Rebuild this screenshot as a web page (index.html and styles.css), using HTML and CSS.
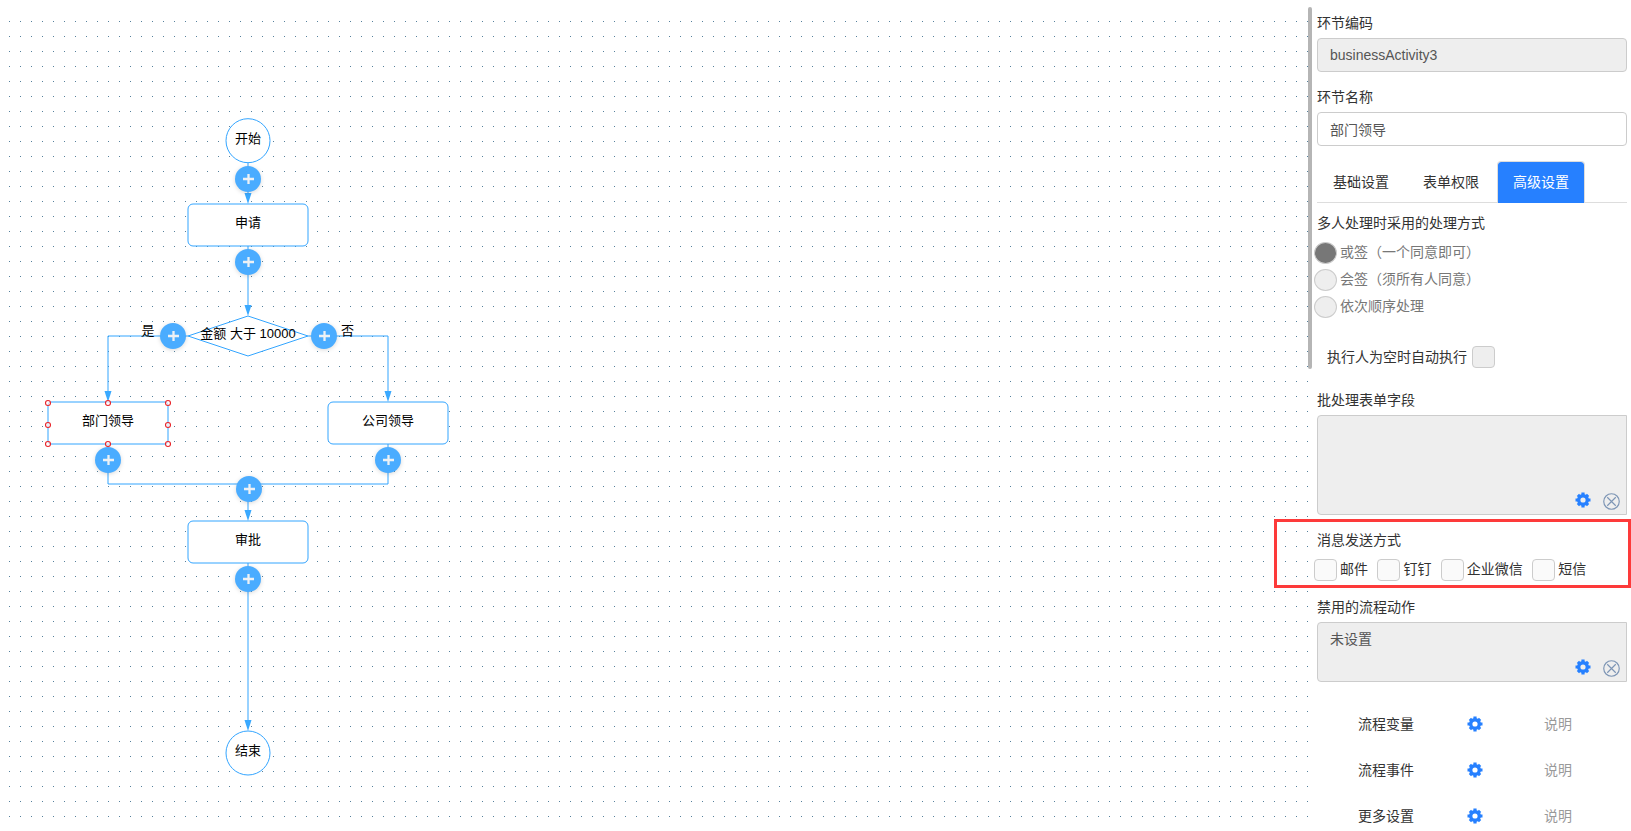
FILE: index.html
```html
<!DOCTYPE html>
<html lang="zh-CN">

<head>
    <meta charset="UTF-8">
    <meta name="viewport" content="width=device-width, initial-scale=1.0">
    <title>流程设计</title>
    <link rel="stylesheet" href="styles.css">
</head>

<body>

    <svg class="canvas" width="1308" height="831" viewBox="0 0 1308 831">
        <defs>
            <pattern id="grid" x="9" y="21" width="11" height="15" patternUnits="userSpaceOnUse">
                <rect width="1" height="1" fill="#55809c" shape-rendering="crispEdges"/>
            </pattern>
            <path id="arrow" d="M0 0L-3.5 -11H3.5Z"/>
            <g id="plus">
                <circle class="plus-bg" r="13"/>
                <path class="plus-sign" d="M-5 0H6M.5 -5V5"/>
            </g>
            <circle id="handle" r="2.5"/>
        </defs>
        <rect x="9" y="21" width="1299" height="796" fill="url(#grid)"/>

        <!-- connections -->
        <g class="line">
            <path d="M248 163V200"/>
            <path d="M248 246V313"/>
            <path d="M188 336H108V398"/>
            <path d="M308 336H388V398"/>
            <path d="M108 444V484H388V444"/>
            <path d="M248 484V517"/>
            <path d="M248 563V727"/>
        </g>
        <g class="arrows">
            <use href="#arrow" x="248" y="204"/>
            <use href="#arrow" x="248" y="316"/>
            <use href="#arrow" x="108" y="402"/>
            <use href="#arrow" x="388" y="402"/>
            <use href="#arrow" x="248" y="521"/>
            <use href="#arrow" x="248" y="731"/>
        </g>

        <!-- nodes -->
        <g class="node">
            <circle cx="248" cy="140.7" r="22"/>
            <rect x="188" y="204" width="120" height="42" rx="5"/>
            <path d="M248 316L308 336L248 356L188 336Z"/>
            <rect x="48" y="402" width="120" height="42" rx="3"/>
            <rect x="328" y="402" width="120" height="42" rx="5"/>
            <rect x="188" y="521" width="120" height="42" rx="5"/>
            <circle cx="248" cy="753" r="22"/>
        </g>
        <g class="node-text">
            <text x="248" y="143">开始</text>
            <text x="248" y="227">申请</text>
            <text x="248" y="338">金额 大于 10000</text>
            <text x="148" y="335">是</text>
            <text x="347.5" y="335">否</text>
            <text x="108" y="425">部门领导</text>
            <text x="388" y="425">公司领导</text>
            <text x="248" y="544">审批</text>
            <text x="248" y="755">结束</text>
        </g>

        <g class="handles">
            <use href="#handle" x="48" y="403"/>
            <use href="#handle" x="108" y="403"/>
            <use href="#handle" x="168" y="403"/>
            <use href="#handle" x="48" y="425"/>
            <use href="#handle" x="168" y="425"/>
            <use href="#handle" x="48" y="444"/>
            <use href="#handle" x="108" y="444"/>
            <use href="#handle" x="168" y="444"/>
        </g>

        <use href="#plus" x="248" y="179"/>
        <use href="#plus" x="248" y="262"/>
        <use href="#plus" x="173" y="336"/>
        <use href="#plus" x="324" y="336"/>
        <use href="#plus" x="108" y="460"/>
        <use href="#plus" x="388" y="460"/>
        <use href="#plus" x="249" y="489"/>
        <use href="#plus" x="248" y="579"/>
    </svg>

    <div class="splitter"></div>

    <div class="panel">
        <label class="title" for="code">环节编码</label>
        <input class="field" type="text" id="code" value="businessActivity3" disabled>

        <label class="title" for="name">环节名称</label>
        <input class="field" type="text" id="name" value="部门领导">

        <div class="tabs">
            <div class="tab">基础设置</div>
            <div class="tab">表单权限</div>
            <div class="tab active">高级设置</div>
        </div>

        <div class="title">多人处理时采用的处理方式</div>
        <div class="radios">
            <div class="radio"><span class="dot checked"></span>或签（一个同意即可）</div>
            <div class="radio"><span class="dot"></span>会签（须所有人同意）</div>
            <div class="radio"><span class="dot"></span>依次顺序处理</div>
        </div>

        <div class="auto">执行人为空时自动执行<span class="box disabled"></span></div>

        <div class="title">批处理表单字段</div>
        <div class="area">
            <div class="tools">
                <svg class="gear" viewBox="0 0 16 16"><use href="#gear"/></svg>
                <svg class="clear" viewBox="0 0 16 16"><use href="#clear"/></svg>
            </div>
        </div>

        <div class="message">
            <div class="title">消息发送方式</div>
            <div class="checks">
                <span class="check"><span class="box"></span>邮件</span>
                <span class="check"><span class="box"></span>钉钉</span>
                <span class="check"><span class="box"></span>企业微信</span>
                <span class="check"><span class="box"></span>短信</span>
            </div>
            <div class="highlight"></div>
        </div>

        <div class="title">禁用的流程动作</div>
        <div class="area small">
            未设置
            <div class="tools">
                <svg class="gear" viewBox="0 0 16 16"><use href="#gear"/></svg>
                <svg class="clear" viewBox="0 0 16 16"><use href="#clear"/></svg>
            </div>
        </div>

        <div class="settings">
            <div class="row">
                <span>流程变量</span>
                <svg class="gear" viewBox="0 0 16 16"><use href="#gear"/></svg>
                <span class="desc">说明</span>
            </div>
            <div class="row">
                <span>流程事件</span>
                <svg class="gear" viewBox="0 0 16 16"><use href="#gear"/></svg>
                <span class="desc">说明</span>
            </div>
            <div class="row">
                <span>更多设置</span>
                <svg class="gear" viewBox="0 0 16 16"><use href="#gear"/></svg>
                <span class="desc">说明</span>
            </div>
        </div>
    </div>

    <svg width="0" height="0" class="icons">
        <symbol id="gear" viewBox="0 0 16 16">
            <g fill="none" stroke="#2680ff">
                <circle cx="8" cy="8" r="4.3" stroke-width="3.4"/>
                <path stroke-width="3.2" d="M8 .5V3M8 13V15.5M.5 8H3M13 8H15.5M2.9 2.9L4.4 4.4M11.6 11.6L13.1 13.1M13.1 2.9L11.6 4.4M4.4 11.6L2.9 13.1"/>
            </g>
        </symbol>
        <symbol id="clear" viewBox="0 0 16 16">
            <g fill="none" stroke="#7d95b5" stroke-width="1.1">
                <circle cx="8" cy="8" r="7.3"/>
                <path d="M4 4L12 12M12 4L4 12"/>
            </g>
        </symbol>
    </svg>

</body>

</html>
```
FILE: styles.css
```css
* {
    box-sizing: border-box;
}

body {
    margin: 0;
    height: 831px;
    display: flex;
    overflow: hidden;
    background-color: #fff;
    font-family: "Liberation Sans", "Noto Sans CJK SC", sans-serif;
    font-size: 14px;
    line-height: 20px;
    color: #333;
}

/* Flow chart */
.canvas {
    display: block;
    flex: none;
}

.line {
    fill: none;
    stroke: #33a5ff;
    stroke-width: 1;
}

.arrows {
    fill: #3aa9ff;
}

.node {
    fill: #fff;
    stroke: #33a5ff;
    stroke-width: 1;
}

.node-text {
    font-size: 13px;
    fill: #000;
    text-anchor: middle;
}

.handles {
    fill: #fff;
    fill-opacity: 0.7;
    stroke: #e8252b;
    stroke-width: 1.1;
}

.plus-bg {
    fill: #4aacff;
    filter: drop-shadow(0 1px 2px rgba(0, 0, 0, 0.15));
}

.plus-sign {
    stroke: #edf1f5;
    stroke-width: 2.3;
}

.splitter {
    flex: none;
    width: 4px;
    height: 362px;
    margin-top: 7px;
    border-radius: 2px;
    background-color: #b5b5b5;
}

/* Property panel */
.panel {
    flex: none;
    width: 310px;
    margin-left: 5px;
    padding-top: 13px;
}

.title {
    display: block;
    height: 20px;
    margin-bottom: 5px;
}

.field {
    display: block;
    width: 310px;
    height: 34px;
    margin: 0 0 15px;
    padding: 6px 12px;
    border: 1px solid #ccc;
    border-radius: 4px;
    font: inherit;
    color: #555;
    background-color: #fff;
}

.field:disabled {
    background-color: #eee;
}

.tabs {
    display: flex;
    gap: 2px;
    height: 42px;
    margin-bottom: 10px;
    border-bottom: 1px solid #ddd;
}

.tab {
    width: 88px;
    height: 42px;
    border: 1px solid transparent;
    border-bottom: 0;
    border-radius: 4px 4px 0 0;
    line-height: 40px;
    text-align: center;
}

.tab.active {
    border-color: #ddd;
    background-color: #2680ff;
    background-clip: padding-box;
    color: #fff;
}

.radios {
    margin: 7px 0 0 -3px;
}

.radio {
    display: flex;
    gap: 3px;
    height: 27px;
    padding-top: 2px;
    color: #777;
}

.dot {
    width: 23px;
    height: 22px;
    border: 1px solid #ccc;
    border-radius: 50%;
    background-color: #eee;
}

.dot.checked {
    background-color: #777;
}

.auto {
    display: flex;
    gap: 5px;
    height: 22px;
    margin: 25px 0 22px 10px;
    line-height: 22px;
}

.box {
    flex: none;
    width: 23px;
    height: 22px;
    border: 1px solid #ccc;
    border-radius: 4px;
    background-color: #fafafa;
}

.box.disabled {
    background-color: #eee;
}

.area {
    position: relative;
    height: 100px;
    padding: 6px 12px;
    border: 1px solid #ccc;
    border-radius: 4px 0 0 4px;
    background-color: #eee;
    color: #555;
}

.area.small {
    height: 60px;
}

.tools {
    position: absolute;
    right: 6px;
    bottom: 4px;
    display: flex;
    gap: 12.5px;
}

.gear {
    width: 16px;
    height: 16px;
}

.tools .gear {
    margin-top: -0.5px;
}

.clear {
    width: 17px;
    height: 17px;
    margin-top: 1px;
}

.message {
    position: relative;
    padding-top: 15px;
    margin-bottom: 16px;
}

.checks {
    display: flex;
    gap: 9.4px;
    margin: 9px 0 0 -3px;
    line-height: 20px;
}

.check {
    display: flex;
    gap: 3px;
}

/* red frame around the message options */
.highlight {
    position: absolute;
    left: -43px;
    top: 4px;
    width: 357px;
    height: 69px;
    border: 3px solid #fd3a3a;
}

.settings {
    margin-top: 19px;
}

.row {
    display: grid;
    grid-template-columns: 109px 77px auto;
    align-items: center;
    height: 46px;
    padding-left: 41px;
}

.desc {
    color: #999;
}

.icons {
    position: absolute;
}

.tabs + .title {
    margin-bottom: 7px;
}
```
